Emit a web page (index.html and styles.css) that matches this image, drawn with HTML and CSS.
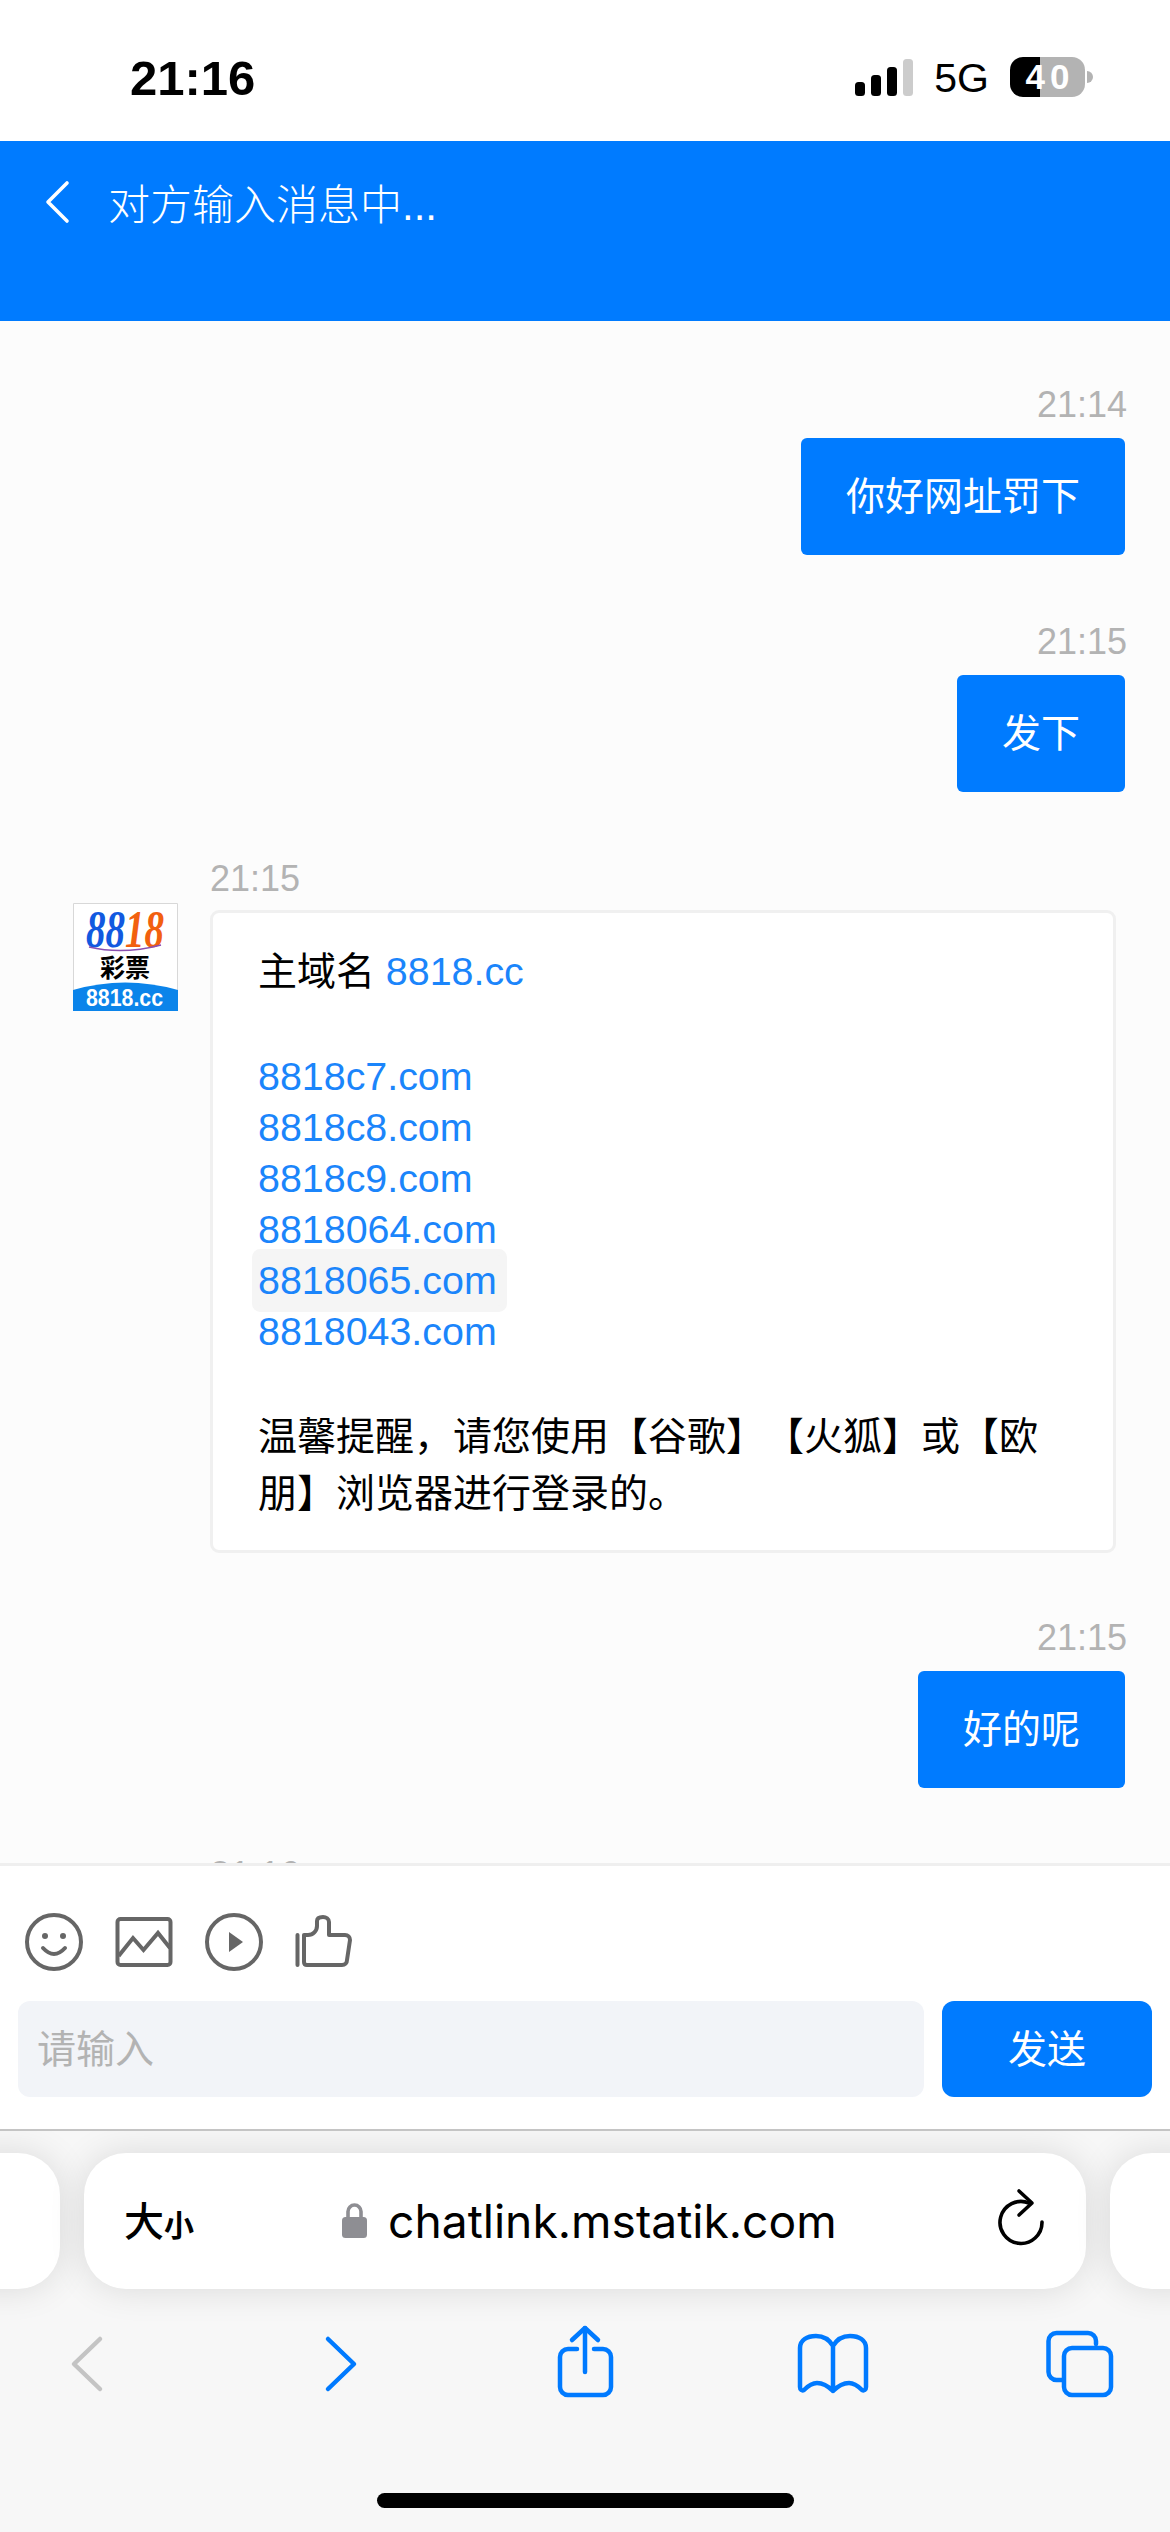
FILE: index.html
```html
<!DOCTYPE html>
<html lang="zh-CN">
<head>
<meta charset="utf-8">
<title>在线客服</title>
<link rel="stylesheet" href="styles.css">
</head>
<body>
<div class="status">
  <span class="clock">21:16</span>
  <div class="status-right">
    <svg class="signal" width="60" height="40" viewBox="0 0 60 40">
      <rect x="0" y="23" width="10" height="14" rx="3.5" fill="#000"/>
      <rect x="16" y="16" width="10" height="21" rx="3.5" fill="#000"/>
      <rect x="32" y="8" width="10" height="29" rx="3.5" fill="#000"/>
      <rect x="48" y="0" width="10" height="37" rx="3.5" fill="#ccc"/>
    </svg>
    <span class="net">5G</span>
    <span class="battery">40</span>
    <span class="battery-nub"></span>
  </div>
</div>

<header class="topbar">
  <svg class="back" width="30" height="44" viewBox="0 0 30 44" fill="none" stroke="#fff" stroke-width="3.6" stroke-linecap="round" stroke-linejoin="round">
    <path d="M25 3 L6 22 L25 41"/>
  </svg>
  <span class="peer">对方输入消息中...</span>
</header>

<main class="chat">
  <div class="msg mine">
    <div class="stamp">21:14</div>
    <div class="bubble">你好网址罚下</div>
  </div>
  <div class="msg mine">
    <div class="stamp">21:15</div>
    <div class="bubble">发下</div>
  </div>
  <div class="msg theirs">
    <svg class="avatar" width="105" height="108" viewBox="0 0 105 108">
      <rect width="105" height="108" fill="#fff"/>
      <path d="M0.5 108 V0.5 H104.5 V108" fill="none" stroke="#d8d8d8"/>
      <text x="13" y="44" class="logo-num" textLength="78" lengthAdjust="spacingAndGlyphs"><tspan fill="#1259e0">88</tspan><tspan fill="#f2600f">18</tspan></text>
      <path d="M16 44 Q50 52 88 42" fill="none" stroke="#8a4fb0" stroke-width="1.5"/>
      <text x="27" y="74" class="logo-cn">彩票</text>
      <path d="M0 87 Q52 72 105 87 V108 H0 Z" fill="#0b84ea"/>
      <text x="13" y="103" class="logo-url" textLength="77" lengthAdjust="spacingAndGlyphs">8818.cc</text>
    </svg>
    <div class="theirs-body">
      <div class="stamp">21:15</div>
      <div class="card">
        <p class="cn">主域名 <a class="link-inline">8818.cc</a></p>
        <div class="links">
          <a class="link">8818c7.com</a>
          <a class="link">8818c8.com</a>
          <a class="link">8818c9.com</a>
          <a class="link">8818064.com</a>
          <a class="link hovered">8818065.com</a>
          <a class="link">8818043.com</a>
        </div>
        <p class="cn">温馨提醒，请您使用【谷歌】【火狐】或【欧朋】浏览器进行登录的。</p>
      </div>
    </div>
  </div>
  <div class="msg mine">
    <div class="stamp">21:15</div>
    <div class="bubble">好的呢</div>
  </div>
  <div class="msg incoming-next">
    <div class="stamp">21:16</div>
  </div>
</main>

<section class="composer">
  <div class="tools">
    <svg width="64" height="64" viewBox="0 0 64 64" fill="none" stroke="#666" stroke-width="4">
      <circle cx="32" cy="32" r="27"/>
      <circle cx="23" cy="26" r="3" fill="#666" stroke="none"/>
      <circle cx="41" cy="26" r="3" fill="#666" stroke="none"/>
      <path d="M21 38 Q32 50 43 38" stroke-linecap="round"/>
    </svg>
    <svg width="64" height="64" viewBox="0 0 64 64" fill="none" stroke="#666" stroke-width="4">
      <rect x="5.5" y="9" width="53" height="46" rx="3"/>
      <path d="M6.6 46 L21 28 L31.5 40 L46 23 L58 38"/>
    </svg>
    <svg width="64" height="64" viewBox="0 0 64 64" fill="none" stroke="#666" stroke-width="4">
      <circle cx="32" cy="32" r="27"/>
      <path d="M27 22 L41 32 L27 42 Z" fill="#666" stroke="none"/>
    </svg>
    <svg width="64" height="64" viewBox="0 0 64 64" fill="none" stroke="#666" stroke-width="4" stroke-linecap="round" stroke-linejoin="round">
      <path d="M5.5 25 V55"/>
      <path d="M12 25 h4 c5 0 9 -4 9 -9 v-5 c0 -3 3 -4 6 -4 s6 2 6 5 v13 h16 c3 0 5 2 5 5 l-3 20 c0 3 -2 5 -5 5 H15 c-2 0 -3 -1 -3 -3 z"/>
    </svg>
  </div>
  <div class="entry">
    <div class="field">请输入</div>
    <div class="send">发送</div>
  </div>
</section>

<footer class="safari">
  <div class="tabs">
    <div class="tab-side tab-prev"></div>
    <div class="urlbar">
      <span class="reader">大<small>小</small></span>
      <svg class="lock" width="25" height="36" viewBox="0 0 25 36">
        <path d="M6 17 V9.5 a6.5 6.5 0 0 1 13 0 V17" fill="none" stroke="#8e8e93" stroke-width="3.6"/>
        <rect x="0" y="15" width="25" height="21" rx="3.5" fill="#8e8e93"/>
      </svg>
      <span class="url">chatlink.mstatik.com</span>
      <svg class="reload" width="60" height="64" viewBox="0 0 60 64" fill="none" stroke="#000" stroke-width="3.6" stroke-linecap="round" stroke-linejoin="round">
        <path d="M38 17 A21 21 0 1 0 51 36"/>
        <path d="M28 5 L41 17 L28 29"/>
      </svg>
    </div>
    <div class="tab-side"></div>
  </div>
  <nav class="nav">
    <svg width="80" height="80" viewBox="0 0 80 80" fill="none" stroke="#c4c4c4" stroke-width="4.5" stroke-linecap="round" stroke-linejoin="round">
      <path d="M54 15 L28 40 L54 65"/>
    </svg>
    <svg width="80" height="80" viewBox="0 0 80 80" fill="none" stroke="#007aff" stroke-width="4.5" stroke-linecap="round" stroke-linejoin="round">
      <path d="M34 15 L60 40 L34 65"/>
    </svg>
    <svg width="80" height="80" viewBox="0 0 80 80" fill="none" stroke="#007aff" stroke-width="4.5" stroke-linecap="round" stroke-linejoin="round">
      <path d="M35 25 H26 a8 8 0 0 0 -8 8 V63 a8 8 0 0 0 8 8 H61 a8 8 0 0 0 8 -8 V33 a8 8 0 0 0 -8 -8 H52"/>
      <path d="M43 48 V4"/>
      <path d="M30 16 L43 4 L56 16"/>
    </svg>
    <svg width="80" height="80" viewBox="0 0 80 80" fill="none" stroke="#007aff" stroke-width="4.5" stroke-linecap="round" stroke-linejoin="round">
      <path d="M43 22 C39 15 33 12 26 12 C17 12 10 16 10 24 V63 c0 3 2 4 4 3 C18 62 22 59 27 59 C33 59 38 62 43 67 C48 62 53 59 59 59 C64 59 68 62 72 66 c2 1 4 0 4 -3 V24 C76 16 69 12 60 12 C53 12 47 15 43 22 V67"/>
    </svg>
    <svg width="80" height="80" viewBox="0 0 80 80" fill="none" stroke="#007aff" stroke-width="4.5" stroke-linecap="round" stroke-linejoin="round">
      <path d="M58 20 V17 a8 8 0 0 0 -8 -8 H18.5 a8 8 0 0 0 -8 8 V48 a8 8 0 0 0 8 8 H24"/>
      <rect x="26" y="24" width="47" height="47" rx="8"/>
    </svg>
  </nav>
  <div class="home"></div>
</footer>
</body>
</html>
```
FILE: styles.css
```css
* { box-sizing: border-box; }

html, body {
  margin: 0;
  padding: 0;
}

body {
  width: 1170px;
  height: 2532px;
  overflow: hidden;
  display: flex;
  flex-direction: column;
  background: #fff;
  font-family: "Liberation Sans", "Noto Sans CJK SC", sans-serif;
  color: #000;
  text-spacing-trim: space-all;
}

/* System status bar */
.status {
  flex: none;
  height: 141px;
  display: flex;
  justify-content: space-between;
  padding: 49px 77px 0 130px;
  background: #fff;
}

.clock {
  font-size: 49px;
  font-weight: 700;
  line-height: 58px;
}

.status-right {
  display: flex;
  align-items: flex-start;
  padding-top: 8px;
}

.signal {
  margin: 2px 19px 0 0;
}

.net {
  font-size: 41px;
  line-height: 42px;
  margin-right: 21px;
}

.battery {
  width: 75px;
  height: 40px;
  border-radius: 13px;
  background: linear-gradient(90deg, #000 40%, #b3b3b3 40%);
  color: #fff;
  font-size: 35px;
  font-weight: 700;
  line-height: 40px;
  text-align: center;
  letter-spacing: 5px;
  text-indent: 5px;
}

.battery-nub {
  width: 6px;
  height: 12px;
  margin: 14px 0 0 2px;
  border-radius: 0 6px 6px 0;
  background: #b3b3b3;
}

/* Conversation header */
.topbar {
  flex: none;
  height: 180px;
  display: flex;
  align-items: flex-start;
  padding: 31px 0 0 42px;
  background: #007bff;
  color: #fff;
}

.back {
  margin: 8px 36px 0 0;
}

.peer {
  font-size: 42px;
  line-height: 68px;
  font-weight: 300;
}

/* Message list */
.chat {
  flex: none;
  height: 1542px;
  overflow: hidden;
  display: flex;
  flex-direction: column;
  gap: 66px;
  padding-top: 63px;
  background: #fcfcfc;
}

.stamp {
  font-size: 36px;
  line-height: 42px;
  color: #b3b3b3;
}

.msg.mine {
  display: flex;
  flex-direction: column;
  align-items: flex-end;
  padding-right: 45px;
}

.mine .stamp {
  margin: 0 -2px 12px 0;
}

.bubble {
  padding: 0 45px;
  height: 117px;
  line-height: 117px;
  font-size: 39px;
  border-radius: 6px;
  background: #007bff;
  color: #fff;
}

.msg.theirs {
  display: flex;
  align-items: flex-start;
  padding-left: 73px;
  margin-bottom: -2px;
}

.incoming-next {
  padding-left: 210px;
}

.avatar {
  flex: none;
  margin: 45px 32px 0 0;
}

.logo-num {
  font-family: "Liberation Serif", serif;
  font-style: italic;
  font-weight: 700;
  font-size: 52px;
}

.logo-cn {
  font-family: "Noto Sans CJK SC", sans-serif;
  font-weight: 700;
  font-size: 25px;
}

.logo-url {
  font-family: "Liberation Sans", sans-serif;
  font-weight: 700;
  font-size: 24px;
  fill: #fff;
}

.theirs-body .stamp {
  margin-bottom: 10px;
}

.card {
  width: 906px;
  padding: 30px 45px 28px;
  border: 3px solid #f0f0f0;
  border-radius: 9px;
  background: #fff;
  font-size: 39px;
}

.cn {
  margin: 0;
  line-height: 57px;
}

.link-inline,
.link {
  color: #1b85fb;
  font-size: 39.4px;
}

.links {
  margin: 51px 0;
}

.link {
  display: block;
  width: fit-content;
  line-height: 51px;
}

.link.hovered {
  padding-right: 4px;
  border-radius: 3px;
  background: #f5f5f5;
  box-shadow: 0 0 0 6px #f5f5f5;
}

/* Message composer */
.composer {
  flex: none;
  height: 266px;
  border-top: 3px solid #efefef;
  padding: 44px 18px 0;
  background: #fff;
}

.tools {
  display: flex;
  gap: 26px;
  padding-left: 4px;
}

.entry {
  display: flex;
  gap: 18px;
  margin-top: 27px;
}

.field,
.send {
  height: 96px;
  line-height: 98px;
  font-size: 39px;
  border-radius: 12px;
}

.field {
  width: 906px;
  padding-left: 19px;
  background: #f2f4f8;
  color: #b3b3b3;
}

.send {
  width: 210px;
  text-align: center;
  background: #007bff;
  color: #fff;
}

/* Browser chrome */
.safari {
  flex: 1;
  display: flex;
  flex-direction: column;
  border-top: 2px solid #c4c4c4;
  background: #f7f7f7;
  overflow: hidden;
}

.tabs {
  display: flex;
  gap: 24px;
  margin-top: 22px;
}

.tab-side,
.urlbar {
  height: 136px;
  background: #fff;
  border-radius: 42px;
  box-shadow: 0 0 36px rgba(0, 0, 0, 0.12);
}

.tab-side {
  flex: none;
  width: 110px;
}

.tab-prev {
  margin-left: -50px;
}

.urlbar {
  flex: none;
  width: 1002px;
  display: flex;
  align-items: center;
  padding: 0 35px 0 40px;
}

.reader {
  width: 218px;
  flex: none;
  font-family: "Noto Sans CJK SC", sans-serif;
  font-size: 40px;
  font-weight: 500;
  line-height: 50px;
}

.reader small {
  font-size: 30px;
  font-weight: 700;
}

.lock {
  flex: none;
  margin: -2px 21px 0 0;
}

.url {
  font-family: "Inter", sans-serif;
  font-size: 46.2px;
  line-height: 60px;
  white-space: nowrap;
}

.reload {
  flex: none;
  margin-left: auto;
  margin-top: -6px;
}

.nav {
  display: flex;
  gap: 168px;
  padding-left: 46px;
  margin-top: 35px;
}

.home {
  width: 417px;
  height: 15px;
  margin: 89px 0 0 377px;
  border-radius: 8px;
  background: #000;
}
```
